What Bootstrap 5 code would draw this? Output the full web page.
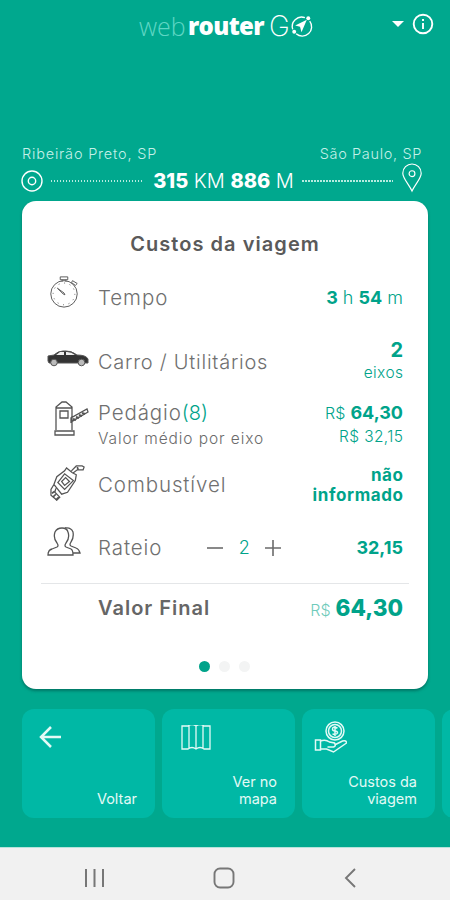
<!DOCTYPE html>
<html lang="pt-BR">
<head>
<meta charset="utf-8">
<meta name="viewport" content="width=device-width, initial-scale=1">
<title>webrouter GO</title>
<link href="https://cdn.jsdelivr.net/npm/bootstrap@5.3.0/dist/css/bootstrap.min.css" rel="stylesheet">
<style>
body{font-family:Inter,"Open Sans",sans-serif;background:#00a88e;color:#6b6b6b;width:450px;height:900px;overflow:hidden;line-height:1.2}
svg{display:block;fill:none;stroke:currentColor;flex:none}
.top{height:145px;padding:9px 16px 0 139px}
.brand{height:34px;line-height:34px;font-family:"Open Sans",sans-serif;font-size:25px}
.brand-web{color:#5ed6c4;font-weight:300;width:49px}
.brand-router{font-weight:800;font-size:24px;width:81px;letter-spacing:-.65px}
.brand-g{font-family:Inter,sans-serif;font-weight:200;font-size:28px;width:20px}
.places{height:17px;padding:0 28px 0 22px;font-size:14.5px;font-weight:300;color:#c4f0e8}
.from{letter-spacing:.8px}
.to{letter-spacing:.65px}
.distance{height:37px;padding:0 27px 0 21px}
.dots-line{height:2px;background:repeating-linear-gradient(90deg,#b5ebe0 0 1.5px,transparent 1.5px 3px)}
.km{font-size:20px;font-weight:300;line-height:36px;width:144px;padding-left:3px}
.km b{font-weight:800}
.costs{width:406px;height:488px;margin:2px 0 0 22px;border-radius:14px;box-shadow:0 2px 3px #00574b99;padding:0 19px}
.costs h1{font-size:20px;font-weight:600;color:#5a5a5a;height:65px;padding-top:31px;letter-spacing:1.05px}
.line{padding:0 6px 0 2px}
.ico{width:55px;color:#555}
.label{font-size:20.5px;font-weight:300;color:#707070;letter-spacing:.9px}
.label-long{font-size:20px;letter-spacing:.75px}
.val{color:#00a38a;font-size:18px;font-weight:300}
.val b{font-weight:700}
.sub{font-size:15.5px;font-weight:300;letter-spacing:.4px;margin-right:-.4px}
.avg{letter-spacing:.9px;margin-top:4px}
.eight{letter-spacing:0}
.toll{margin-top:-1px}
.h64{height:64px}.h63{height:63px}.h56{height:56px}.h70{height:70px}
.total{height:48px;border-top:1px solid #e4e6e8}
.bullet{width:11px;height:11px;border-radius:50%;background:#f3f4f4}
.bullet.on{background:#00a38a}
.stepper{margin-left:44px}.two{width:40px}
.final{font-size:20px;font-weight:600;color:#666;letter-spacing:1px}
.val .sum{font-size:22.5px;font-weight:800}.rs{font-size:16px;color:#6fcbbb}
.pager{gap:9px;padding-top:30px;margin-left:-1px}
.inf{font-size:17px;line-height:20px;letter-spacing:.6px;margin-right:-.6px}
.tiles{margin:20px 0 0 22px;gap:7px;height:109px}
.tile{width:133px;flex:none;border-radius:12px;background:#00b8a5;padding:0 18px 11px 17px;font-size:14.5px;line-height:17px;color:#e3faf6}
.coin{margin-left:-5px;margin-top:4px}
.fuel{margin-left:3px}
.sysbar{height:53px;margin-top:29px;background:#f1f1f1;color:#777;padding:7px 93px 0 85px;border-top:1px solid #b6e3db}
</style>
<script src="https://cdn.jsdelivr.net/npm/bootstrap@5.3.0/dist/js/bootstrap.bundle.min.js"></script>
</head>
<body>
<header class="top d-flex align-items-start text-white">
  <div class="brand d-flex text-nowrap">
    <span class="brand-web">web</span><span class="brand-router">router</span><span class="brand-g">G</span>
    <svg width="24" height="33" viewBox="0 0 24 34" stroke-width="1.400"><path d="M16 9A9.600 9.600 0 0 0 3.500 21M7 25.500A9.600 9.600 0 0 0 21 12.500"/><path d="M18 11 6 17l5 1.300L12.500 24z" fill="currentColor" stroke="none"/><circle cx="19.500" cy="9.500" r="2" fill="currentColor" stroke="none"/><circle cx="5" cy="23.500" r="2" fill="currentColor" stroke="none"/></svg>
  </div>
  <div class="d-flex align-items-center ms-auto gap-2 pt-1">
    <svg width="12" height="8" viewBox="0 0 12 8"><path d="M0 1h12L6 7z" fill="currentColor" stroke="none"/></svg>
    <svg width="22" height="22" viewBox="0 0 22 22" stroke-width="1.900"><circle cx="11" cy="11" r="9.300"/><path d="M11 10v6M11 6v2"/></svg>
  </div>
</header>
<div class="places d-flex justify-content-between"><span class="from">Ribeirão Preto, SP</span><span class="to">São Paulo, SP</span></div>
<div class="distance d-flex align-items-center text-white">
  <svg width="22" height="22" viewBox="0 0 22 22" stroke-width="1.400"><circle cx="11" cy="11" r="10"/><circle cx="11" cy="11" r="3.700"/></svg>
  <div class="dots-line flex-grow-1 mx-2"></div>
  <div class="km text-center text-nowrap"><b>315</b> KM <b>886</b> M</div>
  <div class="dots-line flex-grow-1 mx-2"></div>
  <svg class="mb-1" width="22" height="31" viewBox="0 0 22 32" stroke="#b9ede4" stroke-width="1.200"><path d="M11 29C8 22 1.500 16 1.500 10.500a9.500 9.500 0 0 1 19 0C20.500 16 14 22 11 29Z"/><circle cx="11" cy="11" r="3"/></svg>
</div>
<main class="costs bg-white">
  <h1 class="text-center mb-0">Custos da viagem</h1>
  <div class="line h64 d-flex align-items-center">
    <div class="ico ps-1"><svg class="mb-2 pb-1" width="34" height="38" viewBox="0 0 34 36" stroke-width="1"><circle cx="17" cy="20" r="14"/><circle cx="17" cy="20" r="11.500" stroke-dasharray="1 5"/><path d="M13 2h8v3h-8zM15 5v2M19 5v2M26 6l5 3-2 2-4-3zM10 14l7 5 1 2-2-1z"/></svg></div>
    <span class="label">Tempo</span><span class="val ms-auto"><b>3</b> h <b>54</b> m</span>
  </div>
  <div class="line h63 d-flex align-items-center">
    <div class="ico ps-1"><svg class="mb-2" width="42" height="18" viewBox="0 0 42 18" stroke="#333"><path d="M1 7 7 6q4-4 9-4 8-1 14 4 9 0 11 4v4H2L1 12z" fill="#333"/><path d="m9 6 4-3h4v3zM19 3q5-.5 9 3h-9z" fill="#eee" stroke="none"/><circle cx="7" cy="13.500" r="3.300" fill="#bbb"/><circle cx="34.500" cy="13.500" r="3.300" fill="#bbb"/></svg></div>
    <span class="label label-long">Carro / Utilitários</span><span class="val ms-auto text-end"><b class="d-block fs-5 lh-1 mb-1">2</b><span class="sub d-block">eixos</span></span>
  </div>
  <div class="line h64 d-flex align-items-center">
    <div class="ico ps-2"><svg class="mb-3" width="38" height="38" viewBox="0 0 38 38" stroke-width="1.300"><path d="M5 32V9l6-5h4l6 5v23M4 33h19v4H4zM5 10h16M9 13h8v7H9zM20 23v-3l16-9 1 3-17 10z"/><path d="m22 21 3 1m0-3 3 1m0-3 3 1m0-3 3 1" stroke-width="2"/></svg></div>
    <div class="toll"><span class="label d-block">Pedágio<span class="val fs-5 eight">(8)</span></span><span class="sub avg d-block">Valor médio por eixo</span></div>
    <div class="val ms-auto text-end toll"><div><span class="fs-6">R$</span> <b>64,30</b></div><div class="sub mt-1">R$ 32,15</div></div>
  </div>
  <div class="line h56 d-flex align-items-center">
    <div class="ico ps-1"><svg class="fuel mb-1" width="37" height="37" viewBox="0 0 38 38" stroke-width="1.300"><path d="m4 20 3-8 8-6 2-3 6 5 4 2-1 6-8 12-6 2zM8 18l7-9 9 7-9 9zM12 17l4-4 4 4-5 4zM22 6l5-5h6l2 1-1 3h-6l-4 3M4 20l-3 5v6l6 5 3-3-5-5 1-4"/><path d="m2 29 3-2m-2 6 3-3m0 6 3-3M28 2l1 3" stroke-width="1.700"/></svg></div>
    <span class="label">Combustível</span><span class="val ms-auto text-end inf"><b>não<br>informado</b></span>
  </div>
  <div class="line h70 d-flex align-items-center">
    <div class="ico ps-1"><svg class="mb-2 pb-1" width="34" height="34" viewBox="0 0 34 30" stroke-width="1.300"><path d="M1 28q0-5 4-6l5-2q2-1 0-4Q6 11 8 5q2-4 7-4t6 4q2 6-2 11-2 3 0 4l5 2q2 1 2 6zM18 1q6-1 8 4 1 6-2 10-2 3 0 4l5 2q3 1 4 5h-7"/></svg></div>
    <span class="label">Rateio</span>
    <div class="stepper d-flex align-items-center">
      <svg width="18" height="18" viewBox="0 0 18 18" stroke-width="1.600"><path d="M1 9h16"/></svg>
      <span class="val text-center two">2</span>
      <svg width="18" height="18" viewBox="0 0 18 18" stroke-width="1.600"><path d="M1 9h16M9 1v16"/></svg>
    </div>
    <b class="val fw-bold ms-auto">32,15</b>
  </div>
  <div class="line total d-flex align-items-center">
    <div class="ico"></div><span class="final">Valor Final</span>
    <span class="val ms-auto"><span class="rs">R$</span> <b class="sum">64,30</b></span>
  </div>
  <div class="pager d-flex justify-content-center"><i class="bullet on"></i><i class="bullet"></i><i class="bullet"></i></div>
</main>
<nav class="tiles d-flex overflow-hidden">
  <div class="tile d-flex flex-column justify-content-between text-end pt-3"><svg width="24" height="24" viewBox="0 0 24 24" stroke-width="2.500"><path d="M22 12H3M12 2 2 12l10 10"/></svg><span>Voltar</span></div>
  <div class="tile d-flex flex-column justify-content-between text-end pt-3"><svg width="34" height="26" viewBox="-2 1 34 26" stroke-width="1.300"><path d="M1 2h6q4-3 8 0 4-3 8 0h6v23h-6q-4-3-8 0-4-3-8 0H1zM8 1v23M15 2v23M22 1v23"/></svg><span>Ver no<br>mapa</span></div>
  <div class="tile d-flex flex-column justify-content-between text-end pt-2"><svg class="coin" width="33" height="34" viewBox="0 0 33 34" stroke-width="1.500"><circle cx="21" cy="10" r="9"/><circle cx="21" cy="10" r="6.500"/><path d="M23.500 7q-5-2-5 1 0 2 2.500 2t2.500 2q-1 2-5 1M21 5v10"/><path d="M1.500 19h5v10h-5zM6.500 20q5-2 9 1l5 1q2 3-1 4h-6m7-2 8-4q4-1 4 2l-13 9-7-3-6 0"/></svg><span>Custos da<br>viagem</span></div>
  <div class="tile rounded-end-0 flex-shrink-1"></div>
</nav>
<footer class="sysbar d-flex justify-content-between align-items-center">
  <svg width="19" height="20" viewBox="0 0 19 20" stroke-width="2"><path d="M1 1v18M9.500 1v18M18 1v18"/></svg>
  <svg width="22" height="22" viewBox="0 0 22 22" stroke-width="1.900"><rect x="1.500" y="1.500" width="19" height="19" rx="5.500"/></svg>
  <svg width="13" height="20" viewBox="0 0 13 20" stroke-width="1.900"><path d="M11 1 2 10l9 9"/></svg>
</footer>
</body>
</html>
